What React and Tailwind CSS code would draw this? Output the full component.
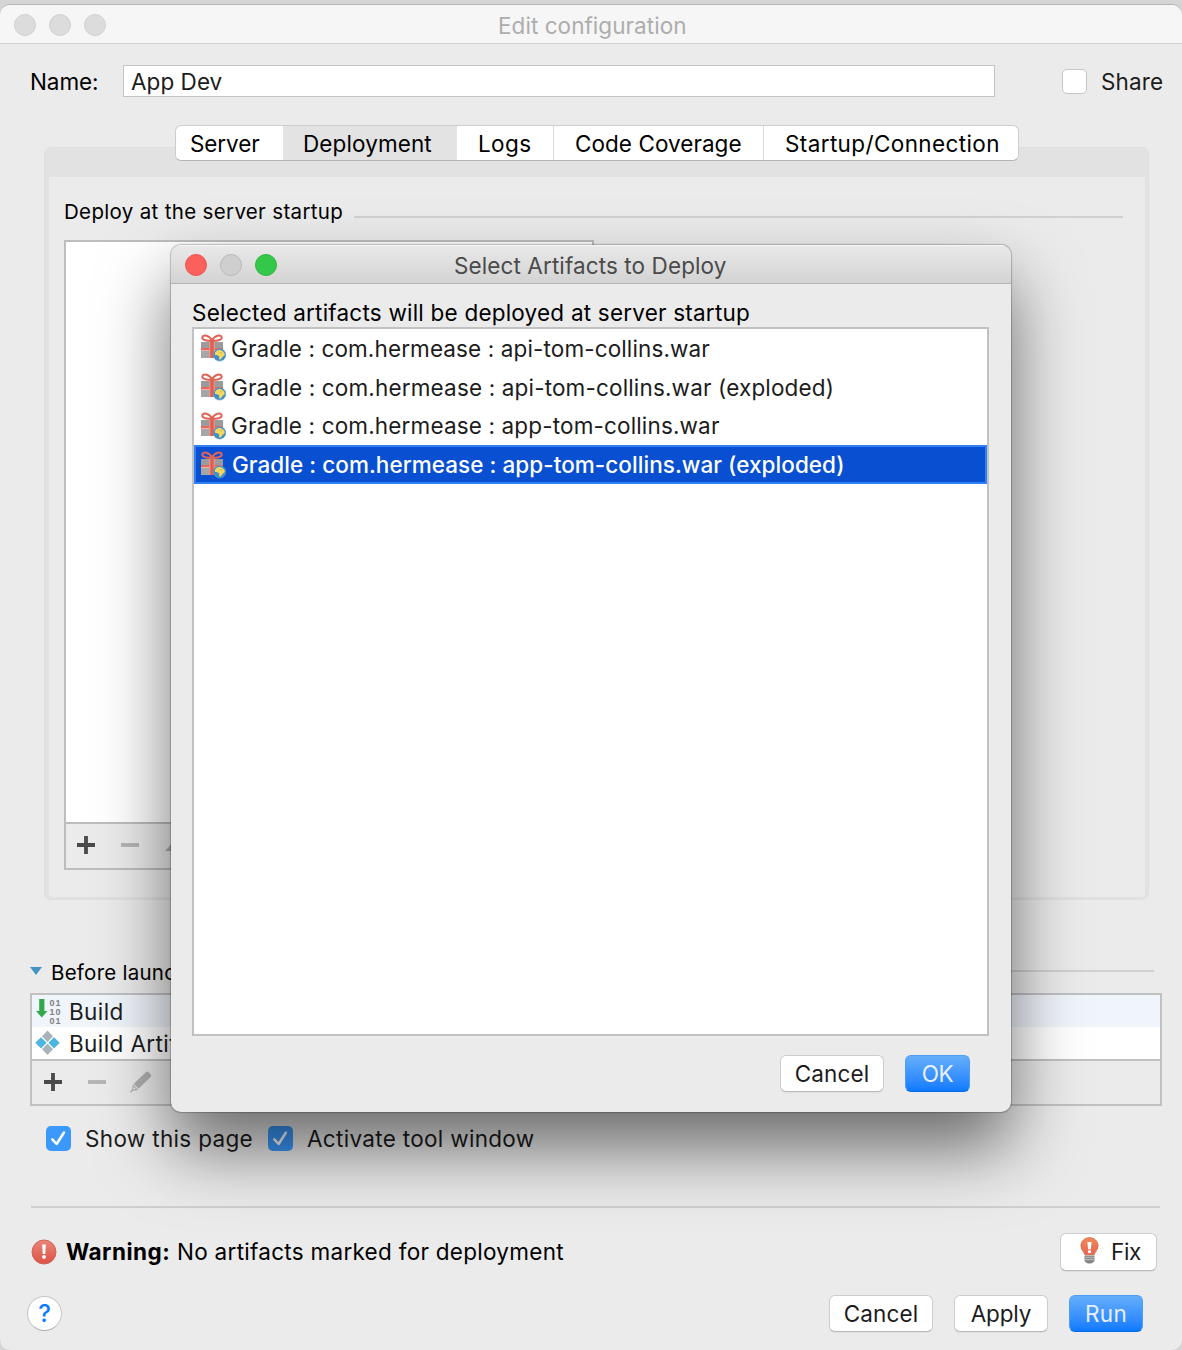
import React from "react";

const btn =
  "flex items-center justify-center rounded-[6px] border border-[#cdcdcd] border-b-[#b9b9b9] bg-white text-[#1c1c1c] shadow-[0_1px_1px_rgba(0,0,0,0.06)]";
const primary =
  "flex items-center justify-center rounded-[6px] border border-[#4b9ff5] border-b-[#0a69e8] bg-linear-to-b from-[#65aefa] to-[#0a7aff] text-[#eaf0fb]";

function Light({ className }) {
  return <span className={"h-[22px] w-[22px] rounded-full border " + className} />;
}

function Plus() {
  return (
    <svg width="18" height="18" viewBox="0 0 18 18" className="block">
      <path d="M9 0v18M0 9h18" stroke="#4a4a4a" strokeWidth="3.800" />
    </svg>
  );
}

function Minus() {
  return (
    <svg width="18" height="18" viewBox="0 0 18 18" className="block">
      <path d="M0 9h18" stroke="#b4b4b4" strokeWidth="3.800" />
    </svg>
  );
}

function Pencil() {
  return (
    <svg width="22" height="22" viewBox="0 0 22 22" className="block" fill="#b0b0b0">
      <path d="M14 3.100 16.100 1.100Q17.300.100 18.400 1.100L20.800 3.500Q21.800 4.600 20.800 5.700L8.600 17.800 3.600 12.900z" />
      <path fillRule="evenodd" d="M2.900 13.600 8 18.700 5.600 19.400 3.500 19.600.600 21.700 0 21.100 2.100 18.400zM3.500 15.800 3 18.600 5.900 18z" />
    </svg>
  );
}

function Gift() {
  return (
    <svg width="26" height="28" viewBox="0 0 26 28" className="block shrink-0">
      <rect x="1" y="8" width="22" height="6" fill="#9b9b9b" />
      <rect x="1" y="14" width="22" height="2" fill="#e66a5c" />
      <rect x="1" y="17" width="22" height="7" fill="#a6a6a6" />
      <rect x="1" y="16" width="22" height="1" fill="#f1b2aa" />
      <rect x="9.300" y="7" width="5.400" height="17" fill="#f0988d" />
      <rect x="10.300" y="7" width="3.400" height="17" fill="#df6052" />
      <g fill="none" stroke="#e06455" strokeWidth="2">
        <path d="M12 6.700C9.500 1 2.800.200 2.300 3.400 2 6.400 7.500 6.700 12 6.700z" />
        <path d="M12 6.700C14.500 1 21.200.200 21.700 3.400 22 6.400 16.500 6.700 12 6.700z" />
      </g>
      <circle cx="19.600" cy="20.900" r="6.200" fill="#3f8fc8" stroke="#5d9fce" strokeWidth=".6" />
      <path d="M14.800 18.800 17 16.600 20 15.800 22.500 17 24.500 19 24.700 21 22.800 22.800 20.500 25.500 19 25.300 19.200 22.600 17.500 21.300 15.200 21z" fill="#f6d75c" />
      <path d="M19 18.300 21.500 18 22 19.200 20.500 19.400z" fill="#b9c27a" />
    </svg>
  );
}

function BuildIcon() {
  return (
    <svg width="26" height="28" viewBox="0 0 26 28" className="block shrink-0">
      <path d="M3.200 2h5.200v12h3.100L5.800 20.500 0 14h3.200z" fill="#33a84b" />
      <g fill="#808080" fontFamily="Liberation Sans" fontWeight="bold" fontSize="9" letterSpacing="1">
        <text x="13.500" y="9">01</text>
        <text x="13.500" y="18">10</text>
        <text x="13.500" y="27">01</text>
      </g>
    </svg>
  );
}

function ArtifactsIcon() {
  return (
    <svg width="26" height="26" viewBox="0 0 26 26" className="block shrink-0">
      <path d="M12.500.500 18 6.200 12.500 12 7 6.200zM12.500 13.500 18 19.200 12.500 25 7 19.200z" fill="#a9b3ba" />
      <path d="M6 7.200 11.600 12.800 6 18.400.300 12.800zM19 7.200 24.700 12.800 19 18.400 13.400 12.800z" fill="#4db5e0" />
    </svg>
  );
}

function Checked() {
  return (
    <span className="flex h-[25px] w-[25px] items-center justify-center rounded-[5px] bg-[#3b99fc]">
      <svg width="25" height="25" viewBox="0 0 25 25">
        <path d="M6.300 13.300 10.600 18 18 6.500" fill="none" stroke="#fff" strokeWidth="2.500" strokeLinecap="round" strokeLinejoin="round" />
      </svg>
    </span>
  );
}

const artifacts = [
  ["Gradle : com.hermease : api-tom-collins.war", "pt-px tracking-[0.12px]"],
  ["Gradle : com.hermease : api-tom-collins.war (exploded)", "pt-px tracking-[0.16px]"],
  ["Gradle : com.hermease : app-tom-collins.war", "pt-px tracking-[0.15px]"],
];

function Dialog() {
  return (
    <div className="absolute left-[171px] top-[245px] flex h-[867px] w-[840px] flex-col overflow-hidden rounded-[10px] bg-[#ebebeb] shadow-[0_0_1px_1px_rgba(0,0,0,0.22),0_36px_70px_rgba(0,0,0,0.55)]">
      <div className="flex h-[39px] shrink-0 items-center border-b border-t border-b-[#b4b4b4] border-t-[#f6f6f6] bg-linear-to-b from-[#e9e9e9] to-[#d3d3d3] pl-[14px]">
        <div className="flex w-[269px] gap-[13px]">
          <Light className="border-[#e9534e] bg-[#fc605c]" />
          <Light className="border-[#b9b9b9] bg-[#cfcfcf]" />
          <Light className="border-[#2bb640] bg-[#34c84a]" />
        </div>
        <span className="pt-[2px] tracking-[0.1px] text-[#4a4a4a]">Select Artifacts to Deploy</span>
      </div>
      <div className="mt-[14px] pl-[21px] leading-[30px] tracking-[0.21px]">
        Selected artifacts will be deployed at server startup
      </div>
      <div className="ml-[21px] mt-[-1px] h-[709px] w-[797px] shrink-0 border-2 border-[#c1c1c1] bg-white">
        {artifacts.map(([name, tracking]) => (
          <div key={name} className="flex h-[38.700px] items-center gap-[5px] pl-[6px] text-[#1c1c1c]">
            <Gift />
            <span className={tracking}>{name}</span>
          </div>
        ))}
        <div className="flex h-[39px] items-center gap-[6px] border-2 border-[#2f7ff5] bg-[#0850d1] pl-[4px] font-medium text-white">
          <Gift />
          <span className="tracking-[0.05px]">Gradle : com.hermease : app-tom-collins.war (exploded)</span>
        </div>
      </div>
      <div className="mt-[19px] flex justify-end gap-[21px] pr-[41px]">
        <button className={btn + " h-[37px] w-[104px] pt-px tracking-[0.1px]"}>Cancel</button>
        <button className={primary + " h-[37px] w-[65px] pt-px tracking-[-0.3px]"}>OK</button>
      </div>
    </div>
  );
}

export default function App() {
  return (
    <div className="relative h-[1350px] w-[1182px] overflow-hidden bg-[#d5d5d5] pt-[5px] font-[Inter,sans-serif] text-[22.5px] leading-[30px] text-black">
      <div className="flex h-[1345px] flex-col overflow-hidden rounded-[10px] bg-[#ebebeb] shadow-[0_-1px_0_#b5b5b5]">
        <div className="flex h-[39px] shrink-0 items-center border-b border-[#d0d0d0] bg-[#f6f6f6] pl-[14px]">
          <div className="flex w-[484px] gap-[13px] pt-px">
            <Light className="border-[#d0d0d0] bg-[#dcdcdc]" />
            <Light className="border-[#d0d0d0] bg-[#dcdcdc]" />
            <Light className="border-[#d0d0d0] bg-[#dcdcdc]" />
          </div>
          <span className="pt-[3px] tracking-[0.05px] text-[#adadad]">Edit configuration</span>
        </div>

        <div className="mt-[21px] flex h-[32px] shrink-0 items-center pl-[30px]">
          <span className="w-[93px] pt-px tracking-[-0.1px]">Name:</span>
          <div className="flex h-[32px] w-[872px] items-center border border-[#c4c4c4] bg-white pl-[7px] pt-[2px] tracking-[0.05px] text-[#1c1c1c]">App Dev</div>
          <span className="ml-[67px] mr-[14px] h-[25px] w-[25px] rounded-[5px] border border-[#c6c6c6] bg-white" />
          <span className="pt-px tracking-[0.15px] text-[#1c1c1c]">Share</span>
        </div>

        <div className="ml-[44px] mt-[50px] h-[753px] w-[1105px] shrink-0 rounded-[7px] border border-[#dedede] bg-[#e2e2e2] pl-[4px] pr-[3px] pb-[2px]">
          <div className="ml-[126px] -mt-[23px] flex h-[36px] w-[844px] overflow-hidden rounded-[6px] border border-[#cdcdcd] border-b-[#b4b4b4] bg-white">
            <span className="flex w-[107px] items-center pl-[14px] pt-[2px] tracking-[-0.1px]">Server</span>
            <span className="flex w-[174px] items-center bg-[#e3e3e3] pl-[20px] pt-[2px] tracking-[0.1px]">Deployment</span>
            <span className="flex w-[97px] items-center border-r border-[#dcdcdc] pl-[21px] pt-[2px] tracking-[0.4px]">Logs</span>
            <span className="flex w-[210px] items-center border-r border-[#dcdcdc] pl-[21px] pt-[2px] tracking-[0.05px]">Code Coverage</span>
            <span className="flex items-center pl-[21px] pt-[2px] tracking-[0.38px]">Startup/Connection</span>
          </div>
          <div className="mt-[16px] h-[720px] rounded-b-[4px] bg-[#ebebeb] pl-[15px] pt-[19px]">
            <div className="flex h-[30px] items-center gap-[11px] text-[20.5px] tracking-[0.33px]">
              <span className="w-[279px] whitespace-nowrap pt-px">Deploy at the server startup</span>
              <span className="mt-[11px] h-[2px] w-[769px] bg-[#d0d0d0]" />
            </div>
            <div className="mt-[14px] flex h-[630px] w-[530px] flex-col border-2 border-[#bdbdbd] bg-white">
              <div className="flex-1" />
              <div className="flex h-[46px] items-center gap-[26px] border-t-2 border-[#bdbdbd] bg-[#ebebeb] pb-[2px] pl-[11px]">
                <Plus />
                <Minus />
                <svg width="18" height="10" viewBox="0 0 18 10" className="mt-[2px]"><path d="M9 0 18 10H0z" fill="#b0b0b0" /></svg>
              </div>
            </div>
          </div>
        </div>

        <div className="mt-[57px] flex h-[30px] shrink-0 items-center pl-[30px]">
          <svg width="12" height="8" viewBox="0 0 12 8" className="-mt-[2px]"><path d="M0 0h12L6 8z" fill="#4593c4" /></svg>
          <span className="ml-[9px] w-[230px] pt-px text-[20.5px] tracking-[0.25px]">Before launch</span>
          <span className="-mt-[3px] h-[2px] w-[873px] bg-[#d0d0d0]" />
        </div>

        <div className="ml-[30px] mt-[6px] flex h-[113px] w-[1132px] shrink-0 flex-col border-2 border-[#c1c1c1] text-[#1c1c1c]">
          <div className="flex h-[32px] items-center gap-[7px] bg-[#f0f4fb] pl-[4px]">
            <BuildIcon />
            <span className="pt-px tracking-[0.4px]">Build</span>
          </div>
          <div className="flex h-[32px] items-center gap-[8px] bg-white pl-[3px]">
            <ArtifactsIcon />
            <span className="pt-[2px] tracking-[0.4px]">Build Artifacts</span>
          </div>
          <div className="flex flex-1 items-center gap-[26px] border-t-2 border-[#c1c1c1] pb-[2px] pl-[12px]">
            <Plus />
            <Minus />
            <span className="-ml-[2px]"><Pencil /></span>
          </div>
        </div>

        <div className="mt-[17px] flex h-[30px] shrink-0 items-center pl-[46px] text-[#1c1c1c]">
          <Checked />
          <span className="ml-[14px] w-[183px] pt-px tracking-[0.33px]">Show this page</span>
          <Checked />
          <span className="ml-[14px] pt-px tracking-[0.31px]">Activate tool window</span>
        </div>

        <div className="ml-[31px] mt-[53px] h-[2px] w-[1129px] shrink-0 bg-[#cfcfcf]" />

        <div className="mt-[25px] flex h-[38px] shrink-0 items-center pl-[31px] pr-[25px]">
          <svg width="26" height="26" viewBox="0 0 26 26" className="-mt-px">
            <defs>
              <linearGradient id="warn" x1="0" y1="0" x2="0" y2="1">
                <stop offset="0" stopColor="#e8877a" />
                <stop offset="1" stopColor="#dc5145" />
              </linearGradient>
            </defs>
            <circle cx="13" cy="13" r="12" fill="url(#warn)" stroke="#d26358" />
            <path d="M11.200 5.500h3.600l-.5 9.500h-2.600z" fill="#fff" />
            <circle cx="13" cy="18" r="1.900" fill="#fff" />
          </svg>
          <span className="ml-[9px] w-[111px] font-bold tracking-[0.5px]">Warning:</span>
          <span className="tracking-[0.28px]">No artifacts marked for deployment</span>
          <button className={btn + " ml-auto h-[38px] w-[97px] gap-[12px] pl-[4px] tracking-[-0.3px]"}>
            <svg width="19" height="27" viewBox="0 0 19 27" className="-mt-[3px]">
              <defs>
                <linearGradient id="bulb" x1="0" y1="0" x2="0" y2="1">
                  <stop offset="0" stopColor="#ee8a55" />
                  <stop offset="1" stopColor="#ea6455" />
                </linearGradient>
              </defs>
              <path d="M9.500.700C4.500.700 1 4.300 1 8.800 1 13 4.200 14.500 4.800 17.600h9.400C14.800 14.500 18 13 18 8.800 18 4.300 14.500.700 9.500.700z" fill="url(#bulb)" stroke="#dc6a4a" />
              <path d="M7.400 5h4.200l-.7 7.300H8.100z" fill="#fff" />
              <circle cx="9.500" cy="14.700" r="1.600" fill="#fff" />
              <path d="M4.500 18.500h10v5.200q-1.500 2.800-5 2.800t-5-2.800z" fill="#858585" />
              <path d="M4.500 20.300h10M4.500 22.600h10" stroke="#d2d2d2" strokeWidth=".8" />
            </svg>
            Fix
          </button>
        </div>

        <div className="mt-[24px] flex h-[37px] shrink-0 items-center pl-[27px] pr-[39px]">
          <span className="flex h-[35px] w-[35px] items-center justify-center rounded-full border border-[#c6c6c6] border-b-[#b0b0b0] bg-white pt-px text-[24px] font-medium text-[#0a7aff]">?</span>
          <button className={btn + " ml-auto h-[37px] w-[104px] pt-px tracking-[0.1px]"}>Cancel</button>
          <button className={btn + " ml-[21px] h-[37px] w-[94px] pt-px tracking-[-0.15px]"}>Apply</button>
          <button className={primary + " ml-[21px] h-[37px] w-[74px] pt-px tracking-[0.3px]"}>Run</button>
        </div>
      </div>
      <Dialog />
    </div>
  );
}
